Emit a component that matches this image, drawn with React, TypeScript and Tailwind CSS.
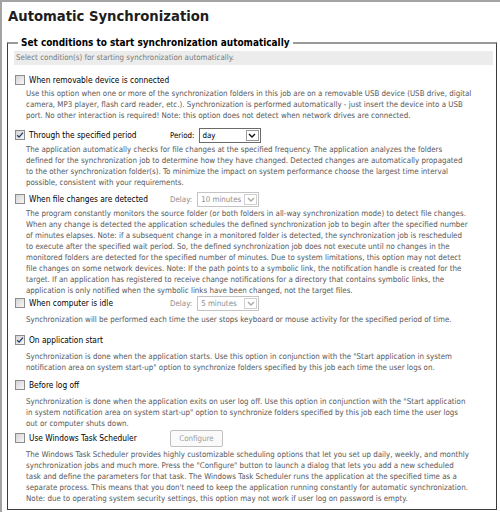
import React from "react";

const FONT = "font-['DejaVu_Sans_Condensed','DejaVu_Sans',sans-serif] [font-stretch:condensed]";

function Check({ checked }: { checked?: boolean }) {
  return (
    <span className="w-[10px] h-[10px] shrink-0 border border-[#8c8c8c] bg-gradient-to-br from-[#d4d4d4] to-[#f7f7f7] flex items-center justify-center">
      {checked && (
        <svg width="8" height="8" viewBox="0 0 8 8">
          <path d="M1.2 4.2 L3.1 6.1 L6.9 1.6" fill="none" stroke="#21386b" strokeWidth="1.3" />
        </svg>
      )}
    </span>
  );
}

function Select({ value, disabled, width }: { value: string; disabled?: boolean; width: string }) {
  return (
    <div
      className={`${width} h-[15px] border flex items-stretch bg-white ${
        disabled ? "border-[#c4c4c4] text-[#8d8d8d]" : "border-[#6b6b6b] text-black"
      }`}
    >
      <span className="flex-1 pl-[3px] leading-[13px]">{value}</span>
      <span
        className={`w-[13px] m-[1px] border flex items-center justify-center ${
          disabled ? "border-[#d0d0d0]" : "border-[#9a9a9a]"
        }`}
      >
        <svg width="8" height="5" viewBox="0 0 8 5">
          <path d="M1 1 L4 4 L7 1" fill="none" stroke={disabled ? "#a8a8a8" : "#111"} strokeWidth="1.4" />
        </svg>
      </span>
    </div>
  );
}

type Opt = {
  label: string;
  checked?: boolean;
  extra?: React.ReactNode;
  lines: string[];
  mt: string;
  dmt: string;
};

const options: Opt[] = [
  {
    label: "When removable device is connected",
    mt: "mt-[7.5px]",
    dmt: "mt-[0px]",
    lines: [
      "Use this option when one or more of the synchronization folders in this job are on a removable USB device (USB drive, digital",
      "camera, MP3 player, flash card reader, etc.). Synchronization is performed automatically - just insert the device into a USB",
      "port. No other interaction is required! Note: this option does not detect when network drives are connected.",
    ],
  },
  {
    label: "Through the specified period",
    checked: true,
    mt: "mt-[7px]",
    dmt: "mt-[1px]",
    extra: (
      <>
        <span className="text-black">Period:</span>
        <span className="ml-[4px]">
          <Select value="day" width="w-[62px]" />
        </span>
      </>
    ),
    lines: [
      "The application automatically checks for file changes at the specified frequency. The application analyzes the folders",
      "defined for the synchronization job to determine how they have changed. Detected changes are automatically propagated",
      "to the other synchronization folder(s). To minimize the impact on system performance choose the largest time interval",
      "possible, consistent with your requirements.",
    ],
  },
  {
    label: "When file changes are detected",
    mt: "mt-[4px]",
    dmt: "mt-[1px]",
    extra: (
      <>
        <span className="text-[#8d8d8d]">Delay:</span>
        <span className="ml-[5px]">
          <Select value="10 minutes" disabled width="w-[62px]" />
        </span>
      </>
    ),
    lines: [
      "The program constantly monitors the source folder (or both folders in all-way synchronization mode) to detect file changes.",
      "When any change is detected the application schedules the defined synchronization job to begin after the specified number",
      "of minutes elapses. Note: if a subsequent change in a monitored folder is detected, the synchronization job is rescheduled",
      "to execute after the specified wait period. So, the defined synchronization job does not execute until no changes in the",
      "monitored folders are detected for the specified number of minutes. Due to system limitations, this option may not detect",
      "file changes on some network devices. Note: If the path points to a symbolic link, the notification handle is created for the",
      "target. If an application has registered to receive change notifications for a directory that contains symbolic links, the",
      "application is only notified when the symbolic links have been changed, not the target files.",
    ],
  },
  {
    label: "When computer is idle",
    mt: "mt-[0px]",
    dmt: "mt-[3px]",
    extra: (
      <>
        <span className="text-[#8d8d8d]">Delay:</span>
        <span className="ml-[5px]">
          <Select value="5 minutes" disabled width="w-[62px]" />
        </span>
      </>
    ),
    lines: [
      "Synchronization will be performed each time the user stops keyboard or mouse activity for the specified period of time.",
    ],
  },
  {
    label: "On application start",
    checked: true,
    mt: "mt-[8px]",
    dmt: "mt-[3px]",
    lines: [
      "Synchronization is done when the application starts. Use this option in conjunction with the \"Start application in system",
      "notification area on system start-up\" option to synchronize folders specified by this job each time the user logs on.",
    ],
  },
  {
    label: "Before log off",
    mt: "mt-[5px]",
    dmt: "mt-[3px]",
    lines: [
      "Synchronization is done when the application exits on user log off. Use this option in conjunction with the \"Start application",
      "in system notification area on system start-up\" option to synchronize folders specified by this job each time the user logs",
      "out or computer shuts down.",
    ],
  },
  {
    label: "Use Windows Task Scheduler",
    mt: "mt-[2px]",
    dmt: "mt-[3px]",
    extra: (
      <span className="h-[17px] w-[53px] border border-[#c0c0c0] rounded-[2px] bg-[#fafafa] text-[#a0a0a0] flex items-center justify-center">
        Configure
      </span>
    ),
    lines: [
      "The Windows Task Scheduler provides highly customizable scheduling options that let you set up daily, weekly, and monthly",
      "synchronization jobs and much more. Press the \"Configure\" button to launch a dialog that lets you add a new scheduled",
      "task and define the parameters for that task. The Windows Task Scheduler runs the application at the specified time as a",
      "separate process. This means that you don't need to keep the application running constantly for automatic synchronization.",
      "Note: due to operating system security settings, this option may not work if user log on password is empty.",
    ],
  },
];

export default function App() {
  return (
    <div className={`w-[500px] h-[512px] bg-white border-l-2 border-t-2 border-[#a3a3a3] overflow-hidden ${FONT}`}>
      <h1 className="pl-[6px] pt-[4px] text-[14.7px] leading-[20px] font-bold text-[#1e1e1e]">
        Automatic Synchronization
      </h1>
      <fieldset className="ml-[5px] mt-[11px] w-[490px] border-l border-r border-b border-t-2 border-l-[#3c3c3c] border-r-[#3c3c3c] border-b-[#3c3c3c] border-t-[#9a9a9a] px-0 pb-[5px]">
        <legend className="ml-[10px] px-[3px] text-[9.95px] leading-[12px] font-bold text-black">
          Set conditions to start synchronization automatically
        </legend>
        <div className="text-[7.9px] leading-[11px]">
          <div className="ml-[6px] mt-[2px] w-[479px] h-[14px] bg-[#ececec] text-[#7a7a7a] pl-[2px] leading-[14px]">
            Select condition(s) for starting synchronization automatically.
          </div>
          {options.map((o) => (
            <div key={o.label} className={o.mt}>
              <div className="h-[15px] flex items-center">
                <div className="w-[162px] pl-[7px] flex items-center gap-[4px] text-black text-[8.3px]">
                  <Check checked={o.checked} />
                  <span className="whitespace-nowrap">{o.label}</span>
                </div>
                {o.extra && <div className="flex items-center">{o.extra}</div>}
              </div>
              <div className={`${o.dmt} pl-[18px] text-[#595959]`}>
                {o.lines.map((l, i) => (
                  <div key={i} className="whitespace-nowrap">
                    {l}
                  </div>
                ))}
              </div>
            </div>
          ))}
        </div>
      </fieldset>
    </div>
  );
}
